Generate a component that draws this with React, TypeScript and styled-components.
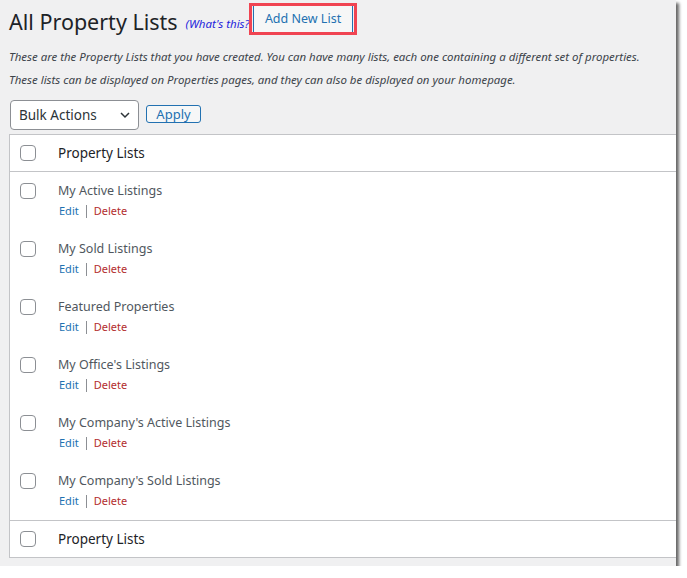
import React from 'react';
import styled, { createGlobalStyle } from 'styled-components';

const GlobalStyle = createGlobalStyle`
  body {
    margin: 0;
    background: #ffffff;
    font-family: "Noto Sans", "Open Sans", sans-serif;
  }
`;

const Frame = styled.div`
  width: 676px;
  height: 566px;
  background: #f0f0f1;
  box-shadow: 3px 3px 3px rgba(0, 0, 0, 0.6);
  box-sizing: border-box;
  padding: 0 0 0 9px;
  overflow: hidden;
`;

const TitleRow = styled.div`
  display: flex;
  align-items: center;
  height: 37px;
`;

const Title = styled.h1`
  margin: 0;
  font-size: 21.5px;
  font-weight: 400;
  color: #1d2327;
  line-height: 1;
  margin-top: 6px;
`;

const WhatsThis = styled.a`
  font-size: 11.5px;
  font-style: italic;
  color: #1f1fdc;
  margin-left: 8px;
  margin-top: 9px;
  white-space: nowrap;
`;

// the highlighted button sits partly over the help link, as in the screenshot
const AddNew = styled.div`
  position: relative;
  z-index: 1;
  margin-left: -4px;
  border: 3px solid #f04452;
  padding: 0 1px;
  height: 32px;
  box-sizing: border-box;
  display: flex;
  align-items: center;
  background: #f0f0f1;
`;

const AddNewButton = styled.button`
  background: #f6f7f7;
  border: 0;
  border-left: 1px solid #2271b1;
  border-right: 1px solid #2271b1;
  color: #2271b1;
  font-family: inherit;
  font-size: 12.5px;
  height: 26px;
  padding: 0 11px 0 11px;
`;

const Note = styled.p`
  margin: 0;
  font-size: 11.45px;
  font-style: italic;
  color: #3c434a;
  line-height: 23px;
`;

const Notes = styled.div`
  margin-top: 8px;
`;

const Toolbar = styled.div`
  display: flex;
  align-items: center;
  gap: 7px;
  margin-top: 9px;
  margin-left: 1px;
`;

const Select = styled.div`
  width: 129px;
  height: 30px;
  box-sizing: border-box;
  border: 1px solid #8c8f94;
  border-radius: 4px;
  background: #ffffff;
  display: flex;
  align-items: center;
  justify-content: space-between;
  padding: 0 7px 0 8px;
  font-size: 13.5px;
  color: #2c3338;
`;

const ApplyButton = styled.button`
  height: 18px;
  width: 55px;
  box-sizing: border-box;
  border: 1px solid #2271b1;
  border-radius: 3px;
  background: #f6f7f7;
  color: #2271b1;
  font-family: inherit;
  font-size: 13px;
  padding: 0;
  line-height: 14px;
  margin-top: -3px;
`;

const Table = styled.div`
  margin-top: 4px;
  background: #ffffff;
  border: 1px solid #c3c4c7;
  border-right: 0;
`;

const HeadRow = styled.div<{ $top?: boolean }>`
  display: flex;
  align-items: center;
  height: 36px;
  ${(p) => (p.$top ? 'border-bottom: 1px solid #c3c4c7;' : 'border-top: 1px solid #c3c4c7;')}
`;

const Row = styled.div`
  display: flex;
  align-items: flex-start;
  height: 58px;
  box-sizing: border-box;
  padding-top: 11px;
`;

const CheckCell = styled.div`
  width: 48px;
  display: flex;
  padding-left: 10px;
  box-sizing: border-box;
`;

const Box = styled.span`
  display: block;
  width: 16px;
  height: 16px;
  box-sizing: border-box;
  border: 1px solid #8c8f94;
  border-radius: 4px;
  background: #ffffff;
`;

const HeadLabel = styled.div`
  font-size: 13.5px;
  color: #1d2327;
`;

const RowBody = styled.div`
  display: flex;
  flex-direction: column;
  margin-top: -2px;
`;

const Name = styled.div`
  font-size: 12.5px;
  color: #50575e;
  line-height: 20px;
`;

const Actions = styled.div`
  display: flex;
  align-items: center;
  font-size: 11px;
  line-height: 16px;
  margin-top: 2px;
  padding-left: 1px;
`;

const ActionLink = styled.a<{ $danger?: boolean }>`
  color: ${(p) => (p.$danger ? '#b32d2e' : '#2271b1')};
`;

const Sep = styled.span`
  display: inline-block;
  width: 1px;
  height: 13px;
  background: #8c8f94;
  margin: 0 7px 0 7px;
`;

const lists = [
  'My Active Listings',
  'My Sold Listings',
  'Featured Properties',
  "My Office's Listings",
  "My Company's Active Listings",
  "My Company's Sold Listings",
];

const Chevron = () => (
  <svg width="12" height="12" viewBox="0 0 12 12" fill="none">
    <path d="M2 4l4 4 4-4" stroke="#2c3338" strokeWidth="1.5" />
  </svg>
);

const App: React.FC = () => (
  <>
    <GlobalStyle />
    <Frame>
      <TitleRow>
        <Title>All Property Lists</Title>
        <WhatsThis>(What's this?)</WhatsThis>
        <AddNew>
          <AddNewButton>Add New List</AddNewButton>
        </AddNew>
      </TitleRow>
      <Notes>
        <Note>These are the Property Lists that you have created. You can have many lists, each one containing a different set of properties.</Note>
        <Note>These lists can be displayed on Properties pages, and they can also be displayed on your homepage.</Note>
      </Notes>
      <Toolbar>
        <Select>
          Bulk Actions
          <Chevron />
        </Select>
        <ApplyButton>Apply</ApplyButton>
      </Toolbar>
      <Table>
        <HeadRow $top>
          <CheckCell><Box /></CheckCell>
          <HeadLabel>Property Lists</HeadLabel>
        </HeadRow>
        {lists.map((name) => (
          <Row key={name}>
            <CheckCell><Box /></CheckCell>
            <RowBody>
              <Name>{name}</Name>
              <Actions>
                <ActionLink>Edit</ActionLink>
                <Sep />
                <ActionLink $danger>Delete</ActionLink>
              </Actions>
            </RowBody>
          </Row>
        ))}
        <HeadRow>
          <CheckCell><Box /></CheckCell>
          <HeadLabel>Property Lists</HeadLabel>
        </HeadRow>
      </Table>
    </Frame>
  </>
);

export default App;
